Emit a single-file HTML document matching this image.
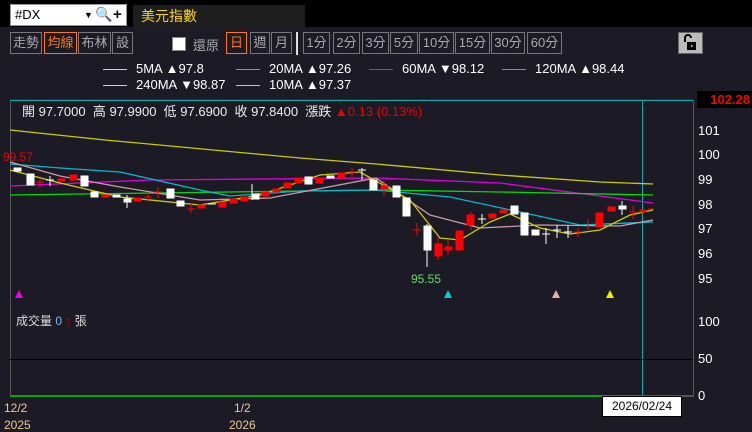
<!DOCTYPE html>
<html><head><meta charset="utf-8"><style>
*{margin:0;padding:0;box-sizing:border-box}
body{width:752px;height:427px;background:#1b1a25;overflow:hidden;position:relative;font-family:"Liberation Sans","Noto Sans CJK TC",sans-serif;color:#ddd}
.a{position:absolute}
.btn{position:absolute;top:32px;height:22px;border:1px solid #777;color:#aaa;font-size:13px;line-height:20px;text-align:center}
.on{border-color:#ff7a00;color:#ff7a00}
.lg{position:absolute;font-size:13px;color:#fff;white-space:nowrap}
.ln{display:inline-block;width:24px;height:1px;vertical-align:middle;margin-right:9px}
.ax{position:absolute;left:698px;font-size:13px;color:#fff}
</style></head><body>
<div class="a" style="left:0;top:0;width:752px;height:27px;background:#000"></div>
<div class="a" style="left:10px;top:4px;width:117px;height:22px;background:#fff;border:1px solid #999;color:#000;font-size:13px;line-height:20px;padding-left:4px">#DX<span style="position:absolute;left:73px;font-size:9px">▼</span><span style="position:absolute;left:84px;top:-1px;font-size:14px;color:#555">🔍</span><span style="position:absolute;left:102px;font-weight:bold;font-size:15px">+</span></div>
<div class="a" style="left:133px;top:5px;width:172px;height:22px;background:#1e1e1e;color:#ffd800;font-size:14px;line-height:22px;padding-left:8px">美元指數</div>
<div class="btn" style="left:10px;width:32px">走勢</div>
<div class="btn on" style="left:44px;width:33px">均線</div>
<div class="btn" style="left:78px;width:33px">布林</div>
<div class="btn" style="left:112px;width:21px">設</div>
<div class="a" style="left:172px;top:37px;width:14px;height:14px;background:#fff;border:1px solid #888"></div>
<div class="a" style="left:193px;top:35px;font-size:13px;color:#aaa">還原</div>
<div class="btn on" style="left:226px;width:21px">日</div>
<div class="btn" style="left:250px;width:20px">週</div>
<div class="btn" style="left:271px;width:21px">月</div>
<div class="a" style="left:296px;top:32px;width:2px;height:23px;background:#ddd"></div>
<div class="btn" style="left:303px;width:27px">1分</div>
<div class="btn" style="left:333px;width:27px">2分</div>
<div class="btn" style="left:362px;width:27px">3分</div>
<div class="btn" style="left:390px;width:28px">5分</div>
<div class="btn" style="left:419px;width:35px">10分</div>
<div class="btn" style="left:455px;width:35px">15分</div>
<div class="btn" style="left:491px;width:34px">30分</div>
<div class="btn" style="left:527px;width:35px">60分</div>
<div class="a" style="left:678px;top:32px;width:25px;height:22px;background:#bbb;border:1px solid #666">
<svg width="23" height="20"><path d="M6 9V5a3 3 0 0 1 6 0" stroke="#000" stroke-width="2" fill="none"/><rect x="8" y="9" width="9" height="8" fill="#000"/><rect x="12" y="12" width="1.5" height="2" fill="#bbb"/></svg></div>
<div class="lg" style="left:103px;top:61px"><span class="ln" style="background:#ee0"></span>5MA ▲97.8</div>
<div class="lg" style="left:236px;top:61px"><span class="ln" style="background:#0cc"></span>20MA ▲97.26</div>
<div class="lg" style="left:369px;top:61px"><span class="ln" style="background:#e0e"></span>60MA ▼98.12</div>
<div class="lg" style="left:502px;top:61px"><span class="ln" style="background:#0e0"></span>120MA ▲98.44</div>
<div class="lg" style="left:103px;top:77px"><span class="ln" style="background:#ee0"></span>240MA ▼98.87</div>
<div class="lg" style="left:236px;top:77px"><span class="ln" style="background:#eaa"></span>10MA ▲97.37</div>
<svg class="a" style="left:0;top:0" width="752" height="427">
<line x1="10" y1="100" x2="693" y2="100" stroke="#444"/>
<line x1="10.5" y1="100" x2="10.5" y2="397" stroke="#555"/>
<line x1="693.5" y1="100" x2="693.5" y2="397" stroke="#555"/>
<line x1="10" y1="100.5" x2="693" y2="100.5" stroke="#1aa"/>
<line x1="642.5" y1="100" x2="642.5" y2="396" stroke="#1aa"/>
<line x1="10" y1="359.5" x2="693" y2="359.5" stroke="#000"/>
<line x1="10" y1="396" x2="640" y2="396" stroke="#0a0" stroke-width="2"/>
<line x1="640" y1="396" x2="693" y2="396" stroke="#555" stroke-width="2"/>
<g fill="none" stroke-width="1.3">
<polyline stroke="#cc0" points="10,130 105,140 300,158 376,164 500,175 600,182 653,184"/>
<polyline stroke="#d0d" points="10,186 150,180 376,178 500,183 653,203"/>
<polyline stroke="#0d0" points="10,195 376,190 500,192 653,195"/>
<polyline stroke="#0bc" points="10,164 60,168 120,172 200,190 230,196 300,191 376,190 450,197 520,212 580,225 653,222"/>
<polyline stroke="#c9a" points="10,162 60,176 120,187 200,200 270,198 376,178 430,215 480,228 540,225 620,226 653,220"/>
<polyline stroke="#cc0" points="10,170 60,183 120,197 200,205 260,195 320,175 360,172 410,200 440,238 460,240 490,222 510,214 540,228 570,234 600,230 630,215 653,210"/>
</g>
<g stroke-width="1">
<g fill="#fff" stroke="#fff">
<rect x="14" y="168" width="7" height="3"/><rect x="27" y="174" width="7" height="11"/><line x1="46" y1="180" x2="54" y2="180"/><line x1="50" y1="176" x2="50" y2="186"/>
<rect x="81" y="176" width="7" height="10"/><rect x="91" y="192" width="7" height="5"/><rect x="113" y="195" width="7" height="2"/><rect x="124" y="199" width="7" height="3"/><line x1="127" y1="195" x2="127" y2="208"/>
<rect x="167" y="189" width="7" height="9"/><rect x="177" y="201" width="7" height="5"/><line x1="208" y1="204" x2="216" y2="204"/><line x1="252" y1="184" x2="252" y2="200"/><rect x="252" y="194" width="7" height="5"/>
<rect x="305" y="177" width="7" height="7"/><rect x="327" y="176" width="7" height="2"/><line x1="358" y1="170" x2="366" y2="170"/><line x1="362" y1="168" x2="362" y2="180"/><rect x="370" y="180" width="7" height="10"/>
<rect x="393" y="186" width="7" height="11"/><rect x="403" y="198" width="7" height="18"/><line x1="427" y1="224" x2="427" y2="267"/><rect x="424" y="226" width="7" height="24"/>
<line x1="478" y1="219" x2="486" y2="219"/><line x1="482" y1="214" x2="482" y2="224"/><rect x="511" y="206" width="7" height="8"/><rect x="521" y="213" width="7" height="22"/><rect x="532" y="230" width="7" height="5"/>
<line x1="542" y1="234" x2="550" y2="234"/><line x1="546" y1="228" x2="546" y2="244"/><line x1="553" y1="230" x2="561" y2="230"/><line x1="557" y1="225" x2="557" y2="238"/><line x1="564" y1="232" x2="572" y2="232"/><line x1="568" y1="226" x2="568" y2="238"/>
<rect x="619" y="206" width="7" height="3"/><line x1="622" y1="201" x2="622" y2="215"/>
</g>
<g fill="#f00" stroke="#f00">
<line x1="36" y1="182" x2="44" y2="182"/><line x1="40" y1="178" x2="40" y2="188"/><rect x="58" y="179" width="7" height="2"/><rect x="70" y="175" width="7" height="5"/>
<rect x="102" y="195" width="7" height="2"/><rect x="134" y="198" width="7" height="3"/><line x1="144" y1="197" x2="152" y2="197"/><line x1="148" y1="192" x2="148" y2="202"/><line x1="154" y1="192" x2="162" y2="192"/><line x1="158" y1="187" x2="158" y2="198"/>
<line x1="187" y1="209" x2="195" y2="209"/><line x1="191" y1="204" x2="191" y2="213"/><rect x="198" y="205" width="7" height="3"/><rect x="219" y="202" width="7" height="5"/><rect x="230" y="199" width="7" height="4"/><rect x="241" y="197" width="7" height="4"/>
<rect x="262" y="192" width="7" height="4"/><rect x="273" y="189" width="7" height="3"/><rect x="284" y="183" width="7" height="5"/><rect x="295" y="178" width="7" height="5"/><rect x="316" y="178" width="7" height="5"/><rect x="338" y="173" width="7" height="5"/><line x1="348" y1="172" x2="356" y2="172"/><line x1="352" y1="168" x2="352" y2="177"/>
<rect x="381" y="186" width="7" height="3"/><line x1="384" y1="181" x2="384" y2="196"/><line x1="413" y1="230" x2="421" y2="230"/><line x1="417" y1="223" x2="417" y2="236"/>
<rect x="435" y="244" width="7" height="12"/><line x1="438" y1="236" x2="438" y2="260"/><rect x="445" y="247" width="7" height="3"/><line x1="448" y1="240" x2="448" y2="255"/><rect x="456" y="231" width="7" height="19"/>
<rect x="467" y="215" width="7" height="10"/><line x1="471" y1="212" x2="471" y2="230"/><rect x="489" y="214" width="7" height="4"/><rect x="500" y="210" width="7" height="3"/>
<line x1="574" y1="232" x2="582" y2="232"/><line x1="578" y1="228" x2="578" y2="237"/><line x1="588" y1="219" x2="588" y2="230"/><rect x="596" y="213" width="7" height="14"/><rect x="608" y="207" width="7" height="4"/><line x1="629" y1="212" x2="637" y2="212"/><line x1="633" y1="206" x2="633" y2="219"/><rect x="640" y="210" width="6" height="2"/><line x1="648" y1="209" x2="654" y2="209"/>
</g></g>
<polygon points="15,298 19,290 23,298" fill="#e0e"/>
<polygon points="444,298 448,290 452,298" fill="#0cc"/>
<polygon points="552,298 556,290 560,298" fill="#eaa"/>
<polygon points="606,298 610,290 614,298" fill="#ee0"/>
</svg>
<div class="a" style="left:3px;top:150px;font-size:12px;color:#e00">99.57</div>
<div class="a" style="left:411px;top:272px;font-size:12px;color:#6d6">95.55</div>
<div class="a" style="left:22px;top:101px;font-size:13px;color:#eee;white-space:nowrap">開 97.7000&nbsp; 高 97.9900&nbsp; 低 97.6900&nbsp; 收 97.8400&nbsp; 漲跌 <span style="color:#e00">▲0.13 (0.13%)</span></div>
<div class="a" style="left:697px;top:91px;width:55px;height:17px;background:#000;color:#f00;font-weight:bold;font-size:13px;line-height:17px;text-align:right;padding-right:2px">102.28</div>
<div class="ax" style="top:123px">101</div>
<div class="ax" style="top:147px">100</div>
<div class="ax" style="top:172px">99</div>
<div class="ax" style="top:197px">98</div>
<div class="ax" style="top:221px">97</div>
<div class="ax" style="top:246px">96</div>
<div class="ax" style="top:271px">95</div>
<div class="ax" style="top:314px">100</div>
<div class="ax" style="top:351px">50</div>
<div class="ax" style="top:388px">0</div>
<div class="a" style="left:16px;top:312px;font-size:12px;color:#ddd">成交量 <span style="color:#7bf">0</span> <span style="color:#c00">↑</span> 張</div>
<div class="a" style="left:4px;top:401px;font-size:12px;color:#f0c890">12/2</div>
<div class="a" style="left:4px;top:418px;font-size:12px;color:#f0c890">2025</div>
<div class="a" style="left:234px;top:401px;font-size:12px;color:#f0c890">1/2</div>
<div class="a" style="left:229px;top:418px;font-size:12px;color:#f0c890">2026</div>
<div class="a" style="left:602px;top:396px;width:80px;height:21px;background:#fff;border:1px solid #000;color:#000;font-size:12px;line-height:19px;text-align:center">2026/02/24</div>
</body></html>
